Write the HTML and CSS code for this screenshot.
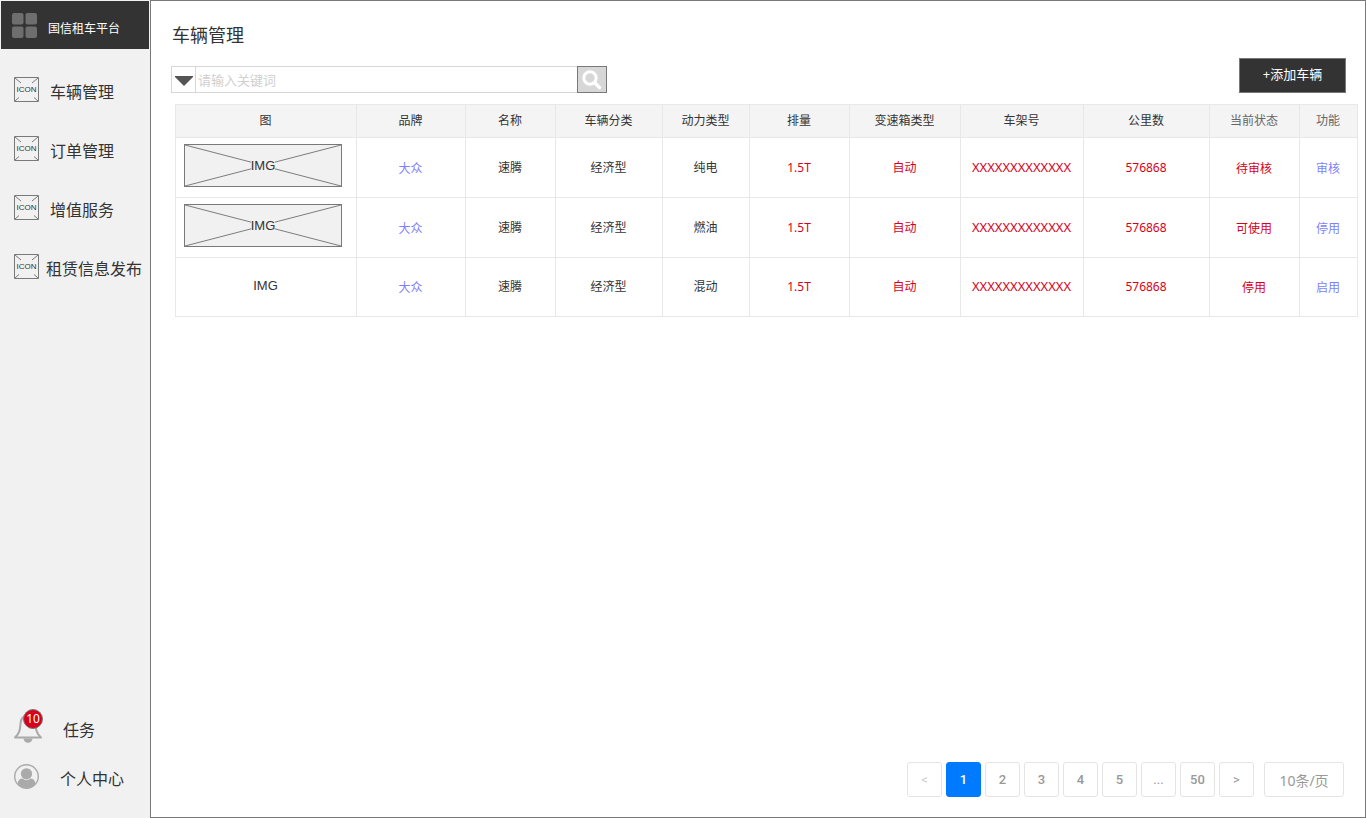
FILE: index.html
```html
<!DOCTYPE html>
<html lang="zh-CN">
<head>
<meta charset="utf-8">
<title>车辆管理</title>
<link rel="stylesheet" href="styles.css">
</head>
<body>
<svg class="sprite" aria-hidden="true">
  <symbol id="icon-box" viewBox="0 0 25 25">
    <path d="M.5.5h24v24H.5zM1 1l6 5M24 1l-6 5M1 24l4-3.500M24 24l-4-3.500" fill="none" stroke="#797979"/>
  </symbol>
</svg>
<div class="app">
  <aside class="sidebar">
    <div class="brand">
      <svg class="brand-icon" width="25" height="25" viewBox="0 0 25 25" aria-hidden="true">
        <g fill="#6e6e6e"><rect width="11.500" height="11.500" rx="2"/><rect x="13.500" width="11.500" height="11.500" rx="2"/><rect y="13.500" width="11.500" height="11.500" rx="2"/><rect x="13.500" y="13.500" width="11.500" height="11.500" rx="2"/></g>
      </svg>
      <span class="brand-name">国信租车平台</span>
    </div>
    <nav class="nav">
      <a class="nav-link" href="#"><span class="nav-icon"><svg width="25" height="25" aria-hidden="true"><use href="#icon-box"/></svg><span class="nav-icon-text">ICON</span></span><span class="nav-label">车辆管理</span></a>
      <a class="nav-link" href="#"><span class="nav-icon"><svg width="25" height="25" aria-hidden="true"><use href="#icon-box"/></svg><span class="nav-icon-text">ICON</span></span><span class="nav-label">订单管理</span></a>
      <a class="nav-link" href="#"><span class="nav-icon"><svg width="25" height="25" aria-hidden="true"><use href="#icon-box"/></svg><span class="nav-icon-text">ICON</span></span><span class="nav-label">增值服务</span></a>
      <a class="nav-link nav-link-long" href="#"><span class="nav-icon"><svg width="25" height="25" aria-hidden="true"><use href="#icon-box"/></svg><span class="nav-icon-text">ICON</span></span><span class="nav-label">租赁信息发布</span></a>
    </nav>
    <div class="user-links">
      <a class="user-link" href="#">
        <span class="bell">
          <svg width="28" height="34" viewBox="0 0 28 34" aria-hidden="true">
            <path d="M1 28.500C6 24 6 20 6.500 14.500C7 9 9.500 6.500 14 6.500S21 9 21.500 14.500C22 20 22 24 27 28.500Z" fill="none" stroke="#aaa" stroke-width="2" stroke-linejoin="round"/>
            <path d="M9.500 29.500h9a4.500 4.200 0 0 1-9 0z" fill="#aaa"/>
          </svg>
          <span class="badge">10</span>
        </span>
        <span class="task-label">任务</span>
      </a>
      <a class="user-link" href="#">
        <svg width="25" height="25" viewBox="0 0 25 25" aria-hidden="true">
          <circle cx="12.500" cy="12.500" r="11.800" fill="none" stroke="#aaa" stroke-width="1.400"/>
          <circle cx="12.500" cy="9.800" r="5.600" fill="#aaa"/>
          <path d="M3.500 19.500C4 16 6 14.500 8.500 14.500Q12.500 18 16.500 14.500C19 14.500 21 16 21.500 19.500Q18 24 12.500 24T3.500 19.500z" fill="#aaa"/>
        </svg>
        <span class="profile-label">个人中心</span>
      </a>
    </div>
  </aside>
  <main class="main">
    <header class="page-head">
      <div class="head-left">
        <h1 class="title">车辆管理</h1>
        <form class="search">
          <span class="search-type"><select class="search-select" aria-label="搜索类型"><option></option></select></span>
          <input class="search-input" type="text" placeholder="请输入关键词" aria-label="关键词">
          <button class="search-button" type="button" aria-label="搜索">
            <svg width="20" height="20" viewBox="0 0 20 20" aria-hidden="true"><circle cx="8" cy="8" r="6.200" fill="none" stroke="#fff" stroke-width="3"/><path d="M12.500 12.500l5 5" stroke="#fff" stroke-width="3.400" stroke-linecap="round"/></svg>
          </button>
        </form>
      </div>
      <button class="add-button" type="button">+添加车辆</button>
    </header>
    <div class="table-wrap">
      <table class="table">
        <colgroup><col class="c-img"><col class="c-brand"><col class="c-name"><col class="c-class"><col class="c-power"><col class="c-engine"><col class="c-gear"><col class="c-vin"><col class="c-km"><col class="c-name"><col class="c-action"></colgroup>
        <thead>
          <tr><th>图</th><th>品牌</th><th>名称</th><th>车辆分类</th><th>动力类型</th><th>排量</th><th>变速箱类型</th><th>车架号</th><th>公里数</th><th class="muted">当前状态</th><th class="muted">功能</th></tr>
        </thead>
        <tbody>
          <tr>
            <td class="img-cell"><span class="img-box"><svg class="img-cross" viewBox="0 0 158 43" preserveAspectRatio="none" aria-hidden="true"><path d="M0 0l67 18M158 0l-67 18M0 43l67-18M158 43l-67-18"/></svg>IMG</span></td>
            <td class="low"><a class="link" href="#">大众</a></td><td>速腾</td><td>经济型</td><td>纯电</td><td class="red">1.5T</td><td class="red">自动</td><td class="red vin">XXXXXXXXXXXXX</td><td class="red">576868</td><td class="red low">待审核</td><td class="low"><a class="link" href="#">审核</a></td>
          </tr>
          <tr>
            <td class="img-cell"><span class="img-box"><svg class="img-cross" viewBox="0 0 158 43" preserveAspectRatio="none" aria-hidden="true"><path d="M0 0l67 18M158 0l-67 18M0 43l67-18M158 43l-67-18"/></svg>IMG</span></td>
            <td class="low"><a class="link" href="#">大众</a></td><td>速腾</td><td>经济型</td><td>燃油</td><td class="red">1.5T</td><td class="red">自动</td><td class="red vin">XXXXXXXXXXXXX</td><td class="red">576868</td><td class="red low">可使用</td><td class="low"><a class="link" href="#">停用</a></td>
          </tr>
          <tr class="last-row">
            <td class="img-text">IMG</td>
            <td class="low"><a class="link" href="#">大众</a></td><td>速腾</td><td>经济型</td><td>混动</td><td class="red">1.5T</td><td class="red">自动</td><td class="red vin">XXXXXXXXXXXXX</td><td class="red">576868</td><td class="red low">停用</td><td class="low"><a class="link" href="#">启用</a></td>
          </tr>
        </tbody>
      </table>
    </div>
    <nav class="pager" aria-label="分页">
      <button class="page page-off" type="button">&lt;</button>
      <button class="page page-current" type="button">1</button>
      <button class="page" type="button">2</button>
      <button class="page" type="button">3</button>
      <button class="page" type="button">4</button>
      <button class="page" type="button">5</button>
      <button class="page page-sign" type="button">...</button>
      <button class="page" type="button">50</button>
      <button class="page page-sign" type="button">&gt;</button>
      <select class="page-size" aria-label="每页条数"><option>10条/页</option></select>
    </nav>
  </main>
</div>
</body>
</html>
```
FILE: styles.css
```css
* {
  box-sizing: border-box;
}

body {
  margin: 0;
  color: #333;
  background: #fff;
  font-family: "Noto Sans", "Noto Sans CJK SC", sans-serif;
  font-size: 12px;
}

a {
  color: inherit;
  text-decoration: none;
}

svg {
  display: block;
}

button,
input,
select {
  margin: 0;
  padding: 0;
  border-radius: 0;
  font: inherit;
  appearance: none;
}

.sprite {
  position: absolute;
  width: 0;
  height: 0;
}

.app {
  display: flex;
  min-height: 100vh;
}

/* Sidebar */
.sidebar {
  display: flex;
  flex: none;
  flex-direction: column;
  width: 150px;
  background: #f1f1f1;
}

.brand {
  display: flex;
  align-items: center;
  gap: 11px;
  height: 48px;
  margin: 1px;
  padding-left: 11px;
  color: #fff;
  background: #333;
}

.brand-name {
  padding-top: 6px;
}

.nav {
  display: flex;
  flex-direction: column;
  gap: 33px;
  padding: 26px 0 0 14px;
}

.nav-link,
.user-link {
  display: flex;
  align-items: center;
  font-size: 16px;
  line-height: 26px;
  white-space: nowrap;
}

.nav-link {
  gap: 11px;
}

.nav-link-long {
  gap: 7px;
}

.nav-label {
  padding-top: 3px;
  margin-bottom: -3px;
}

.nav-icon {
  display: grid;
  place-items: center;
  width: 25px;
}

.nav-icon > * {
  grid-area: 1 / 1;
}

.nav-icon-text {
  padding-top: 2px;
  font: 8px/10px "Liberation Sans", sans-serif;
}

.user-links {
  display: flex;
  flex-direction: column;
  gap: 17px;
  margin-top: auto;
  padding: 0 0 26px 14px;
}

.bell {
  position: relative;
}

.badge {
  position: absolute;
  top: 0;
  left: 9px;
  width: 20px;
  height: 20px;
  border: 1px solid #797979;
  border-radius: 50%;
  color: #fff;
  background: #d9001b;
  font-size: 12px;
  line-height: 18px;
  text-align: center;
}

.task-label,
.profile-label {
  padding: 6px 0 0 21px;
}

.task-label {
  padding-top: 8px;
}

/* Content */
.main {
  display: flex;
  flex: 1;
  flex-direction: column;
  min-width: 0;
  border: 1px solid #797979;
}

.page-head {
  display: flex;
  align-items: flex-end;
  justify-content: space-between;
  padding: 20px 19px 0 20px;
}

.title {
  margin: 0 0 17px 1px;
  font-size: 18px;
  font-weight: 400;
  line-height: 28px;
}

.search {
  display: flex;
  width: 436px;
  height: 27px;
}

.search-type {
  position: relative;
  width: 25px;
  border: 1px solid #d7d7d7;
}

.search-type::after {
  position: absolute;
  top: 9px;
  left: 3px;
  width: 18px;
  height: 10px;
  background: #555;
  clip-path: polygon(0 0, 100% 0, 100% 10%, 50% 100%, 0 10%);
  content: "";
  pointer-events: none;
}

.search-select {
  display: block;
  width: 100%;
  height: 100%;
  border: 0;
  background: #fff;
}

.search-input {
  flex: 1;
  min-width: 0;
  padding: 1px 3px 0 2px;
  border: 1px solid #d7d7d7;
  border-width: 1px 0;
  color: #333;
  font-size: 13px;
}

.search-input::placeholder {
  color: #d0d0d0;
}

.search-button {
  display: grid;
  place-items: center;
  width: 30px;
  border: 1px solid #797979;
  background: #d7d7d7;
}

.add-button {
  width: 107px;
  height: 35px;
  padding-bottom: 5px;
  border: 1px solid #797979;
  color: #fff;
  background: #333;
  font-size: 13px;
}

.table-wrap {
  padding: 11px 7px 0 24px;
}

.table {
  width: 100%;
  border-collapse: collapse;
  table-layout: fixed;
}

.c-img { width: 181px; }
.c-brand { width: 109px; }
.c-name { width: 90px; }
.c-class { width: 107px; }
.c-power { width: 87px; }
.c-engine { width: 100px; }
.c-gear { width: 111px; }
.c-vin { width: 123px; }
.c-km { width: 126px; }
.c-action { width: 58px; }

.table th,
.table td {
  height: 60px;
  padding: 0 1px 0 0;
  border: 1px solid #e8e8e8;
  line-height: 18px;
  text-align: center;
}

.table th {
  height: 33px;
  background: #f4f4f4;
  font-weight: 400;
}

.table .last-row td {
  height: 59px;
}

.table .muted {
  color: #666;
}

.table .red {
  color: #d9001b;
}

.table .low {
  padding-top: 2px;
}

.table .vin {
  padding-bottom: 2px;
  font-size: 13px;
}

.link {
  color: #7f7fff;
}

.table .img-cell {
  padding: 0 14px 4px 8px;
}

.img-box {
  position: relative;
  display: block;
  height: 43px;
  border: 1px solid #797979;
  background: #f1f1f1;
  font: 13px/41px "Liberation Sans", sans-serif;
}

.img-cross {
  position: absolute;
  inset: 0;
  width: 100%;
  height: 100%;
  fill: none;
  stroke: #797979;
}

.table .img-text {
  padding-bottom: 3px;
  font-family: "Liberation Sans", sans-serif;
  font-size: 13px;
}

/* Pagination */
.pager {
  display: flex;
  gap: 4px;
  justify-content: flex-end;
  margin-top: auto;
  padding: 20px 21px 20px;
}

.page,
.page-size {
  height: 35px;
  border: 1px solid #e4e4e4;
  border-radius: 3px;
  color: #999;
  background: #fff;
}

.page {
  width: 35px;
  font: 500 13px Roboto, sans-serif;
}

.page-sign {
  font-weight: 400;
}

.page-off {
  color: #ccc;
  font-weight: 400;
}

.page-current {
  border-color: #007aff;
  color: #fff;
  background: #007aff;
}

.page-size {
  width: 80px;
  margin-left: 6px;
  padding-top: 2px;
  font-size: 14px;
  text-align: center;
  text-align-last: center;
}
```
